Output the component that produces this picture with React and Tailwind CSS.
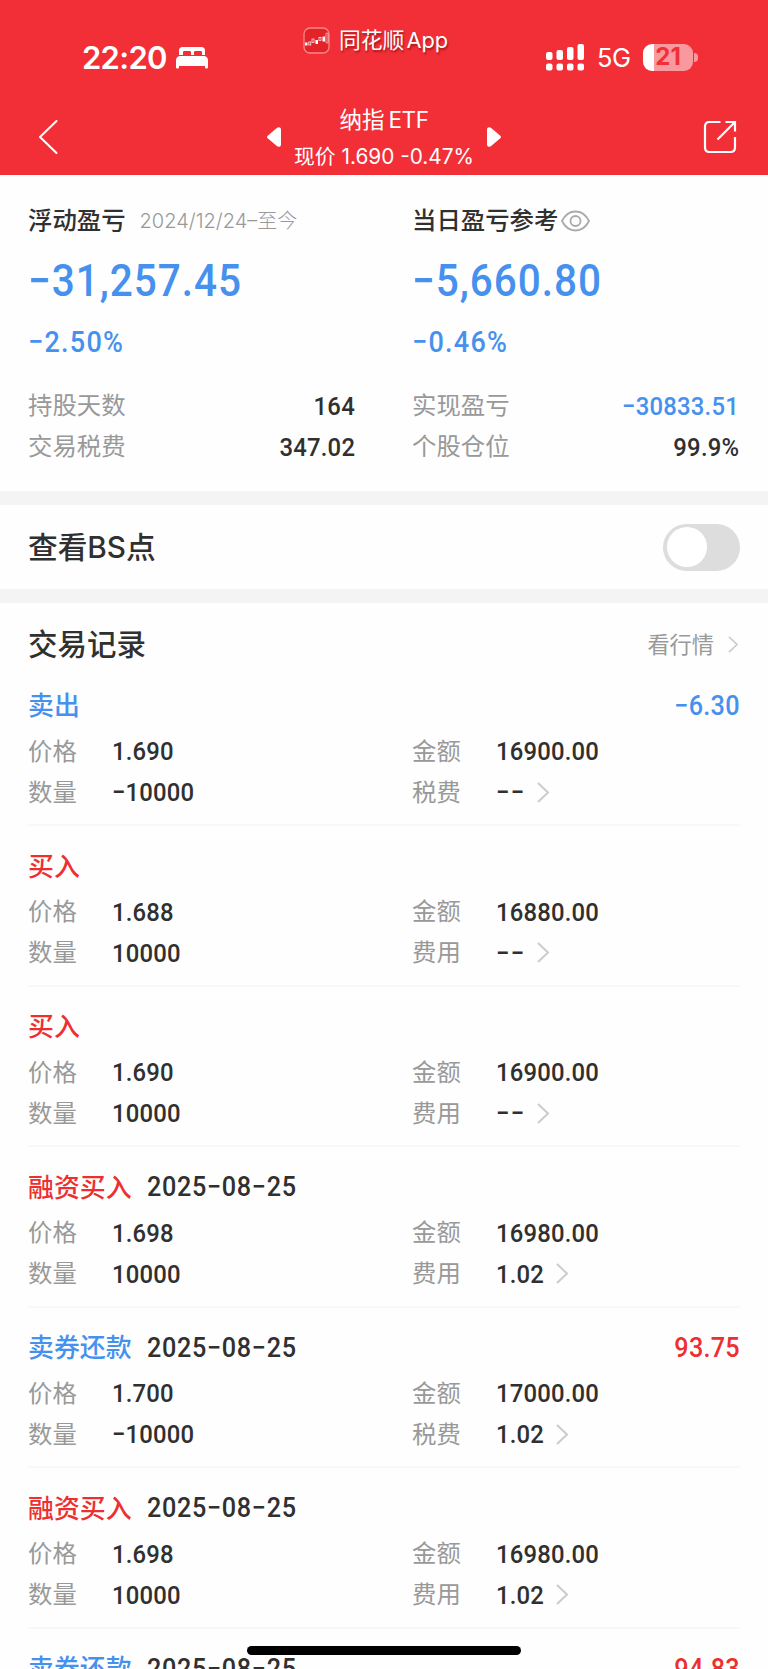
const records = [
  { type: '卖出', sell: true, profit: '−6.30', price: '1.690', count: '−10000', amount: '16900.00', feeLabel: '税费', fee: '−−' },
  { type: '买入', price: '1.688', count: '10000', amount: '16880.00', feeLabel: '费用', fee: '−−' },
  { type: '买入', price: '1.690', count: '10000', amount: '16900.00', feeLabel: '费用', fee: '−−' },
  { type: '融资买入', date: '2025−08−25', price: '1.698', count: '10000', amount: '16980.00', feeLabel: '费用', fee: '1.02' },
  { type: '卖券还款', date: '2025−08−25', sell: true, profit: '93.75', price: '1.700', count: '−10000', amount: '17000.00', feeLabel: '税费', fee: '1.02' },
  { type: '融资买入', date: '2025−08−25', price: '1.698', count: '10000', amount: '16980.00', feeLabel: '费用', fee: '1.02' },
  { type: '卖券还款', date: '2025−08−25', sell: true, profit: '94.83' },
];

function StatusBar() {
  return (
    <div className="flex h-[98px] pl-[82px] pr-[70px] font-['Inter','Noto_Sans_CJK_SC',sans-serif]">
      <div className="mt-[38px] flex h-10 w-[221px] items-center">
        <span className="text-[31px] font-semibold leading-10 tracking-[-0.7px]">22:20</span>
        <svg className="ml-auto mr-[95px] h-[22px] w-8 shrink-0" viewBox="0 0 32 22" fill="currentColor">
          <path d="M3 8V3.500C3 1.300 4.300 0 6.500 0h19C27.700 0 29 1.300 29 3.500V8h-3V5.500c0-1-.5-1.500-1.500-1.500h-5c-1 0-1.500.5-1.500 1.500V8h-3V5.500C15 4.500 14.500 4 13.500 4h-5C7.500 4 7 4.500 7 5.500V8z" />
          <path d="M0 13.500C0 10.800 1.500 9 4.500 9h23c3 0 4.500 1.800 4.500 4.500V20c0 1-.5 1.600-1.500 1.600S29 21 29 20v-1H3v1c0 1-.5 1.600-1.500 1.600S0 21 0 20z" />
        </svg>
      </div>
      <div className="mt-[26px] flex h-7 w-[200px] items-center gap-[9px]">
        <svg className="h-[27px] w-[27px]" viewBox="0 0 27 27" fill="none">
          <rect x="1" y="1" width="25" height="25" rx="6" fill="#e32328" stroke="#f9868a" strokeWidth="1.300" />
          <rect x="2" y="15.500" width="2.500" height="3" fill="#fff" />
          <rect x="5.800" y="15" width="2" height="3" stroke="#fff" strokeWidth=".7" />
          <rect x="9" y="12" width="2" height="3.500" stroke="#fff" strokeWidth=".7" />
          <rect x="12.500" y="13" width="2.500" height="4" fill="#fff" />
          <rect x="16" y="10.500" width="2" height="3" stroke="#fff" strokeWidth=".7" />
          <rect x="19.500" y="9.500" width="2.500" height="5" fill="#fff" />
          <rect x="23" y="6" width="2" height="10" rx=".8" stroke="#fff" strokeWidth=".6" />
        </svg>
        <span className="whitespace-nowrap text-[21.8px] leading-7 [text-shadow:1px_2px_2px_rgba(90,0,0,0.5)]">同花顺<span className="ml-[2px]">App</span></span>
      </div>
      <div className="ml-auto mt-[37px] flex h-10 items-center">
        <svg className="h-[27px] w-[38px]" viewBox="0 0 38 27" fill="currentColor">
          <rect x="0" y="8" width="6.500" height="8" rx="2" />
          <rect x="10.500" y="6" width="6.500" height="10" rx="2" />
          <rect x="21" y="3" width="6.500" height="13" rx="2" />
          <rect x="31.500" y="0" width="6.500" height="16" rx="2" />
          <rect x="0" y="19.500" width="6.500" height="7" rx="2" />
          <rect x="10.500" y="19.500" width="6.500" height="7" rx="2" />
          <rect x="21" y="19.500" width="6.500" height="7" rx="2" />
          <rect x="31.500" y="19.500" width="6.500" height="7" rx="2" />
        </svg>
        <span className="ml-[13px] w-[34px] pt-[2px] text-[25.5px] leading-10 tracking-[-0.5px]">5G</span>
        <div className="ml-[12px] flex h-[27px] w-[50px] items-center justify-center rounded-[9px] bg-linear-to-r from-white from-[11px] to-[#f8999d] to-[11px] text-[24px] font-bold leading-none text-[#f22f37]">
          21
        </div>
        <span className="ml-[1px] h-[9px] w-[4px] rounded-r-full bg-[#f8999d]" />
      </div>
    </div>
  );
}

function NavBar() {
  return (
    <div className="flex h-[77px] items-center justify-between pl-[38px] pr-[31px]">
      <svg className="h-9 w-[27px]" viewBox="0 0 27 36" fill="none" stroke="currentColor" strokeWidth="2" strokeLinecap="round" strokeLinejoin="round">
        <path d="M18.500 2 2 18l16.500 16" />
      </svg>
      <div className="flex items-center gap-[13px]">
        <svg className="h-5 w-[14px]" viewBox="0 0 14 20" fill="currentColor">
          <path d="M.7 8.700 9.800.9C11.500-.5 14 .3 14 2.500v15c0 2.200-2.500 3-4.200 1.600L.7 11.300C-.2 10.500-.2 9.500.7 8.700z" />
        </svg>
        <div className="flex w-[180px] flex-col items-center whitespace-nowrap pt-[3px] font-['Inter','Noto_Sans_CJK_SC',sans-serif]">
          <div className="text-[22.5px] leading-[37px]">纳指<span className="ml-[4px] tracking-[-0.4px]">ETF</span></div>
          <div className="text-[20.8px] leading-[37px]">现价 1.690 -0.47%</div>
        </div>
        <svg className="h-5 w-[14px]" viewBox="0 0 14 20" fill="currentColor">
          <path d="M13.300 8.700 4.200.9C2.500-.5 0 .3 0 2.500v15c0 2.200 2.500 3 4.200 1.600l9.100-7.800c.9-.8.9-1.800 0-2.600z" />
        </svg>
      </div>
      <svg className="h-[34px] w-[34px]" viewBox="0 0 34 34" fill="none" stroke="currentColor" strokeWidth="2.200">
        <path d="M17.500 2H6.500Q2 2 2 6.500v21Q2 32 6.500 32h21q4.500 0 4.500-4.500V17" />
        <path d="M22.500 2H32v9.500M31.500 2.500 14.500 19.500" />
      </svg>
    </div>
  );
}

function Arrow({ className }) {
  return (
    <svg className={className} viewBox="0 0 12 21" fill="none" stroke="#cccccc" strokeWidth="2">
      <path d="M1 1l10 9.500L1 20" />
    </svg>
  );
}

// figures are set slightly condensed
function Num({ className = '', children }) {
  return <span className={`inline-block scale-x-90 font-medium ${className}`}>{children}</span>;
}

function Stat({ label, value, blue }) {
  return (
    <div className="flex h-[41px] items-center justify-between">
      <span className="pt-[2px] text-[24.4px] text-[#999999]">{label}</span>
      <Num className={`origin-right text-[26.5px] tracking-[0.25px] ${blue ? 'text-[#4691ee]' : 'text-[#303030]'}`}>{value}</Num>
    </div>
  );
}

function Profit({ amount, percent }) {
  return (
    <div className="text-[#4691ee]">
      <div className="flex h-[80px] items-center">
        <Num className="origin-left text-[45px] tracking-[1.1px]">{amount}</Num>
      </div>
      <div className="flex h-[40px] items-center">
        <Num className="origin-left text-[30px] tracking-[1.4px]">{percent}</Num>
      </div>
    </div>
  );
}

function Summary() {
  return (
    <div className="flex h-[316px] gap-[57px] px-[28px] pt-[24px]">
      <div className="w-[327px]">
        <div className="flex h-[42px] items-center pt-[2px]">
          <span className="text-[24.4px] font-medium">浮动盈亏</span>
          <span className="ml-[14px] font-['Inter','Noto_Sans_CJK_SC',sans-serif] text-[20px] font-light text-[#999999]">2024/12/24–至今</span>
        </div>
        <Profit amount="−31,257.45" percent="−2.50%" />
        <div className="mt-[24px]">
          <Stat label="持股天数" value="164" />
          <Stat label="交易税费" value="347.02" />
        </div>
      </div>
      <div className="w-[327px]">
        <div className="flex h-[42px] items-center pt-[2px]">
          <span className="text-[24.4px] font-medium">当日盈亏参考</span>
          <svg className="ml-[3px] h-[22px] w-[29px]" viewBox="0 0 29 22" fill="none" stroke="#aaaaaa" strokeWidth="1.800">
            <path d="M1 11C4 5 8.500 1.500 14.500 1.500S25 5 28 11c-3 6-7.500 9.500-13.500 9.500S4 17 1 11z" />
            <circle cx="14.500" cy="11" r="5" />
          </svg>
        </div>
        <Profit amount="−5,660.80" percent="−0.46%" />
        <div className="mt-[24px]">
          <Stat label="实现盈亏" value="−30833.51" blue />
          <Stat label="个股仓位" value="99.9%" />
        </div>
      </div>
    </div>
  );
}

function Field({ label, value, arrow }) {
  const empty = value === '−−';
  return (
    <div className="flex h-[41px] items-center">
      <span className="w-[84px] pt-[2px] text-[24.4px] text-[#999999]">{label}</span>
      <Num className={`origin-left text-[26.5px] ${empty ? 'tracking-[1.5px]' : 'tracking-[0.2px]'}`}>{value}</Num>
      {arrow && <Arrow className={`h-[21px] w-3 ${empty ? 'ml-[8px]' : 'ml-[7px]'}`} />}
    </div>
  );
}

function Record({ item }) {
  return (
    <div className="mx-[28px] h-[160.5px] border-b-2 border-[#f8f8f8] pt-[15px]">
      <div className="flex h-[50px] items-center">
        <span className={`pt-[2px] text-[25.9px] font-medium ${item.sell ? 'text-[#4691ee]' : 'text-[#ee2f30]'}`}>{item.type}</span>
        {item.date && <Num className="ml-[15px] origin-left text-[28px] tracking-[0.75px]">{item.date}</Num>}
        {item.profit && (
          <Num className={`ml-auto origin-right text-[28px] tracking-[0.3px] ${item.profit.startsWith('−') ? 'text-[#4691ee]' : 'text-[#ee2f30]'}`}>
            {item.profit}
          </Num>
        )}
      </div>
      {item.price && (
        <div className="grid grid-cols-[384px_1fr]">
          <Field label="价格" value={item.price} />
          <Field label="金额" value={item.amount} />
          <Field label="数量" value={item.count} />
          <Field label={item.feeLabel} value={item.fee} arrow />
        </div>
      )}
    </div>
  );
}

export default function App() {
  return (
    <div className="relative h-[1669px] w-[768px] overflow-hidden bg-[#fefefe] font-['Roboto','Noto_Sans_CJK_SC',sans-serif] text-[#303030]">
      <header className="h-[175px] bg-[#f22f37] text-white">
        <StatusBar />
        <NavBar />
      </header>
      <Summary />
      <div className="h-[14px] bg-[#f4f4f4]" />
      <div className="flex h-[84px] items-center justify-between px-[28px]">
        <span className="font-['Inter','Noto_Sans_CJK_SC',sans-serif] text-[29.7px] font-medium">查看BS点</span>
        <div className="flex h-[47px] w-[77px] items-center rounded-full bg-[#dddddd] pl-[4px]">
          <div className="h-[40px] w-[40px] rounded-full bg-white" />
        </div>
      </div>
      <div className="h-[14px] bg-[#f4f4f4]" />
      <div className="flex h-[62.5px] items-end justify-between px-[28px]">
        <span className="h-[43px] text-[29.5px] font-medium leading-[44px]">交易记录</span>
        <div className="flex h-[42px] items-center">
          <span className="pt-[2px] text-[22.2px] text-[#999999]">看行情</span>
          <Arrow className="ml-[14px] mr-[2px] h-[17px] w-[10px]" />
        </div>
      </div>
      {records.map((item, i) => (
        <Record key={i} item={item} />
      ))}
      <div className="absolute bottom-[14.5px] left-[247px] h-[9px] w-[274px] rounded-full bg-black" />
    </div>
  );
}
